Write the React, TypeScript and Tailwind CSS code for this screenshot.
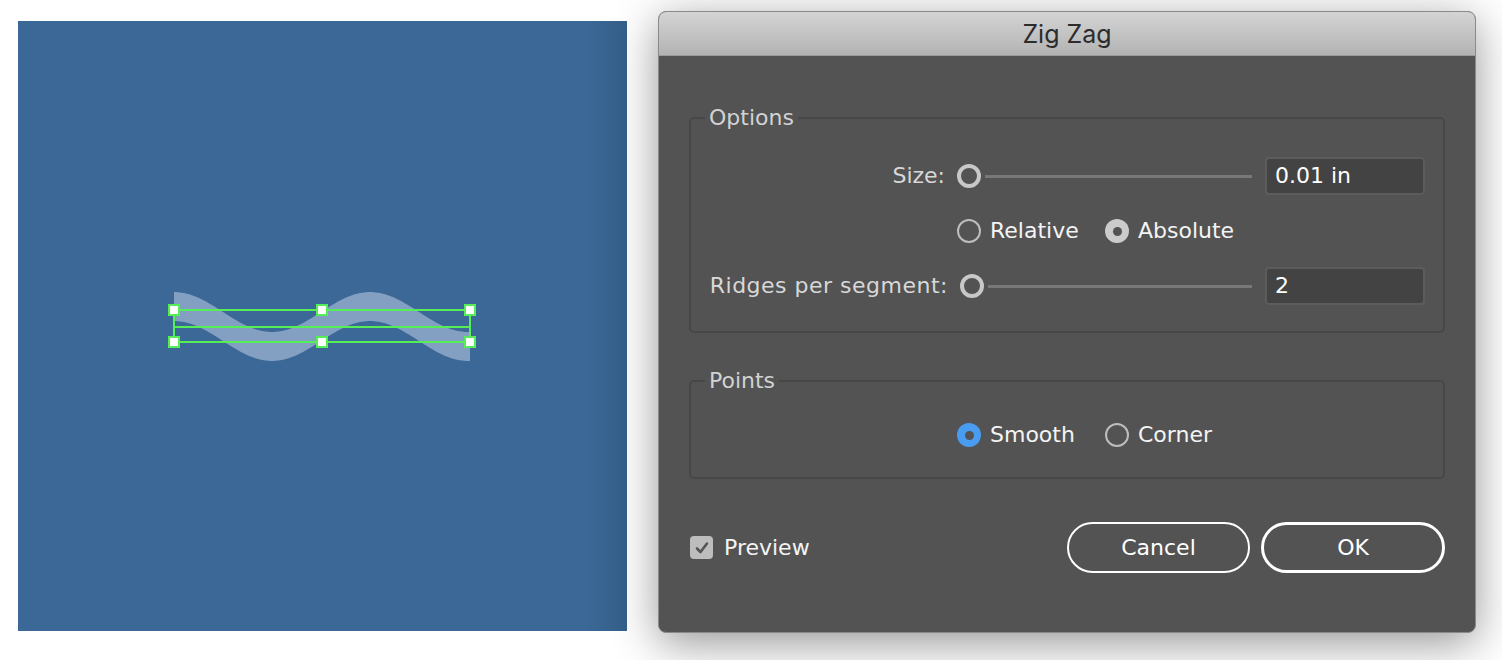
import React from 'react';

// wave band drawn in page coordinates (svg viewBox offset by canvas position)
const wavePoints = (() => {
  const top: string[] = [];
  const bottom: string[] = [];
  for (let x = 174; x <= 470; x += 2) {
    const y = 312 - 20 * Math.cos((2 * Math.PI * (x - 174)) / 196);
    top.push(`${x},${y.toFixed(1)}`);
    bottom.unshift(`${x},${(y + 29).toFixed(1)}`);
  }
  return [...top, ...bottom].join(' ');
})();

const handles = [
  [174, 310],
  [322, 310],
  [470, 310],
  [174, 342],
  [322, 342],
  [470, 342],
];

const Slider: React.FC<{ width: number }> = ({ width }) => (
  <div className="flex items-center" style={{ width }}>
    <div className="w-[24px] h-[24px] rounded-full border-[4px] border-[#c8c8c8] shrink-0" />
    <div className="ml-[4px] h-[3px] flex-1 bg-[#787878]" />
  </div>
);

const Radio: React.FC<{ state?: 'off' | 'on' | 'blue'; label: string; className?: string }> = ({
  state = 'off',
  label,
  className = '',
}) => (
  <div className={`flex items-center ${className}`}>
    {state === 'off' && <div className="w-[24px] h-[24px] rounded-full border-2 border-[#bdbdbd] shrink-0" />}
    {state === 'on' && (
      <div className="w-[24px] h-[24px] rounded-full bg-[#cbcbcb] flex items-center justify-center shrink-0">
        <div className="w-[9px] h-[9px] rounded-full bg-[#535353]" />
      </div>
    )}
    {state === 'blue' && (
      <div className="w-[24px] h-[24px] rounded-full bg-[#4a9cf0] flex items-center justify-center shrink-0">
        <div className="w-[9px] h-[9px] rounded-full bg-[#535353]" />
      </div>
    )}
    <span className="ml-[9px] text-[#f4f4f4]">{label}</span>
  </div>
);

const Field: React.FC<{ value: string }> = ({ value }) => (
  <div className="w-[160px] h-[38px] rounded-[4px] bg-[#434343] border-2 border-[#5c5c5c] flex items-center pl-[8px] text-white">
    {value}
  </div>
);

export default function App() {
  return (
    <div className="w-[1502px] h-[660px] bg-white flex items-start overflow-hidden font-['DejaVu_Sans',sans-serif] text-[22px] leading-[26px]">
      {/* Artboard */}
      <div className="ml-[18px] mt-[21px] w-[609px] h-[610px] bg-[linear-gradient(to_right,#3b6897_93%,#355f8a)]">
        <svg width="609" height="610" viewBox="18 21 609 610">
          <polygon points={wavePoints} fill="#839fc1" />
          <g stroke="#55ef55" strokeWidth="2" fill="none">
            <rect x="174" y="310" width="296" height="32" />
            <line x1="174" y1="327" x2="470" y2="327" />
          </g>
          {handles.map(([x, y]) => (
            <rect key={`${x}-${y}`} x={x - 5} y={y - 5} width="10" height="10" fill="#fff" stroke="#55ef55" strokeWidth="2" />
          ))}
        </svg>
      </div>

      {/* Dialog */}
      <div className="ml-[31px] mt-[11px] w-[818px] h-[622px] rounded-[8px] bg-[#535353] border border-[#8a8a8a] shadow-[0_10px_45px_rgba(0,0,0,0.42)] flex flex-col overflow-hidden">
        <div className="h-[44px] shrink-0 bg-[linear-gradient(to_bottom,#d4d4d4,#b3b3b3)] border-b border-[#9a9a9a] flex items-center justify-center">
          <span className="font-['Inter',sans-serif] text-[25px] text-[#2c2c2c]">Zig Zag</span>
        </div>

        <div className="flex flex-col px-[30px] pt-[49px]">
          {/* Options */}
          <fieldset className="border-2 border-[#474747] rounded-[5px] px-[18px] pt-[26px] pb-[26px]">
            <legend className="ml-[-4px] px-[4px] text-[#d2d2d2]">Options</legend>
            <div className="flex flex-col gap-[17px]">
              <div className="flex items-center h-[38px]">
                <span className="w-[236px] text-right text-[#d8d8d8]">Size:</span>
                <div className="ml-[12px]">
                  <Slider width={295} />
                </div>
                <div className="ml-[13px]">
                  <Field value="0.01 in" />
                </div>
              </div>
              <div className="flex items-center h-[38px] pl-[248px]">
                <Radio label="Relative" className="w-[148px]" />
                <Radio label="Absolute" state="on" />
              </div>
              <div className="flex items-center h-[38px]">
                <span className="w-[239px] text-right text-[#d8d8d8] tracking-[0.5px]">Ridges per segment:</span>
                <div className="ml-[12px]">
                  <Slider width={292} />
                </div>
                <div className="ml-[13px]">
                  <Field value="2" />
                </div>
              </div>
            </div>
          </fieldset>

          {/* Points */}
          <fieldset className="mt-[35px] border-2 border-[#474747] rounded-[5px] px-[18px] pt-[22px] pb-[23px]">
            <legend className="ml-[-4px] px-[4px] text-[#d2d2d2]">Points</legend>
            <div className="flex items-center h-[38px] pl-[248px]">
              <Radio label="Smooth" state="blue" className="w-[148px]" />
              <Radio label="Corner" />
            </div>
          </fieldset>

          {/* Footer */}
          <div className="mt-[43px] flex items-center">
            <div className="ml-[1px] w-[23px] h-[23px] rounded-[4px] bg-[#bdbdbd] flex items-center justify-center">
              <svg width="16" height="16" viewBox="0 0 16 16">
                <path d="M3 8.5 L6.5 12 L13 3.5" fill="none" stroke="#555" strokeWidth="2.6" strokeLinecap="round" strokeLinejoin="round" />
              </svg>
            </div>
            <span className="ml-[11px] text-[#f4f4f4]">Preview</span>
            <div className="ml-auto flex gap-[11px]">
              <button className="w-[183px] h-[51px] rounded-full border-2 border-white text-white">Cancel</button>
              <button className="w-[184px] h-[51px] rounded-full border-[3px] border-white text-white">OK</button>
            </div>
          </div>
        </div>
      </div>
    </div>
  );
}
